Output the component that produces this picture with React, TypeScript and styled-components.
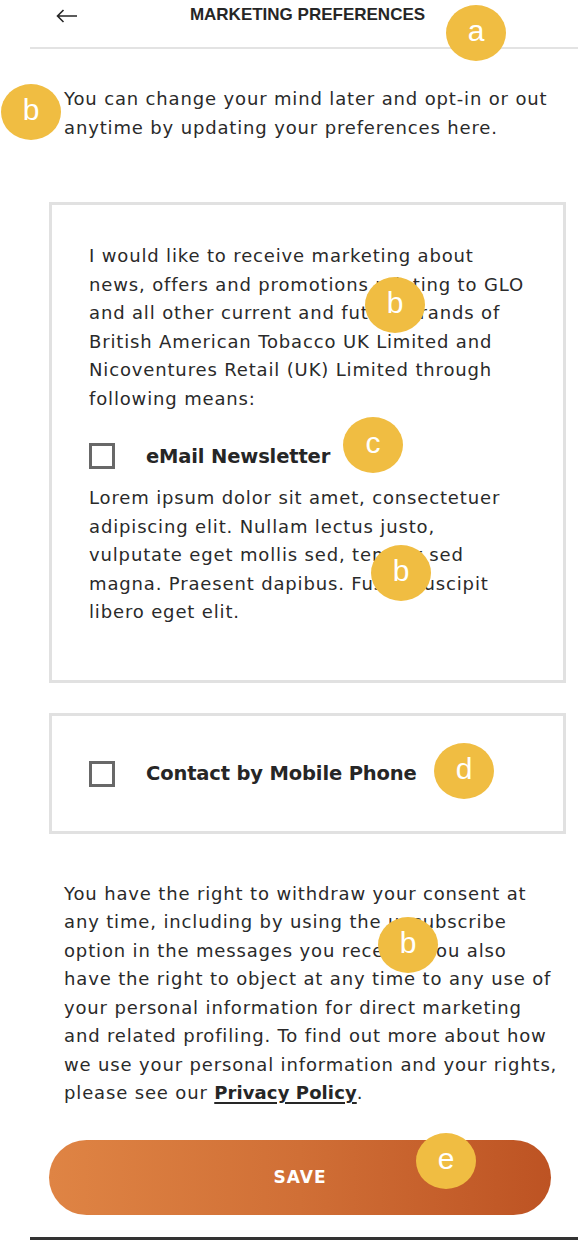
import React from "react";
import styled, { createGlobalStyle } from "styled-components";

const Global = createGlobalStyle`
  html, body { margin: 0; padding: 0; background: #fff; }
  body { font-family: "DejaVu Sans", sans-serif; color: #262626; }
  * { box-sizing: border-box; }
`;

const Page = styled.div`
  position: relative;
  width: 578px;
  height: 1240px;
  overflow: hidden;
  background: #fff;
`;

const Header = styled.header`
  position: relative;
  margin-left: 30px;
  padding-left: 7px;
  height: 49px;
  border-bottom: 2px solid #e3e3e3;
  display: flex;
  align-items: flex-start;
  justify-content: center;
`;

const BackButton = styled.button`
  position: absolute;
  left: 25px;
  top: 6px;
  width: 24px;
  height: 20px;
  padding: 0;
  border: none;
  background: none;
  display: flex;
  align-items: center;
  justify-content: center;
`;

const Title = styled.h1`
  margin: 5px 0 0;
  font-family: "Liberation Sans", Arial, sans-serif;
  font-size: 17px;
  line-height: 20px;
  font-weight: 700;
  color: #262626;
`;

const Paragraph = styled.p<{ $top: number }>`
  margin: ${(p) => p.$top}px 0 0 64px;
  white-space: nowrap;
  font-size: 18px;
  letter-spacing: 0.85px;
  line-height: 28.5px;
  color: #2a2a2a;
`;

const Card = styled.section<{ $top: number; $pad: string }>`
  margin: ${(p) => p.$top}px 12px 0 49px;
  border: 3px solid #e1e1e1;
  padding: ${(p) => p.$pad};
`;

const CardText = styled.p<{ $top?: number }>`
  margin: ${(p) => p.$top ?? 0}px 0 0;
  white-space: nowrap;
  font-size: 18px;
  letter-spacing: 0.85px;
  line-height: 28.5px;
  color: #2a2a2a;
`;

const OptionRow = styled.label<{ $top?: number }>`
  display: flex;
  align-items: center;
  gap: 31px;
  margin-top: ${(p) => p.$top ?? 0}px;
  height: 28px;
`;

const Box = styled.span`
  width: 26px;
  height: 26px;
  border: 3px solid #686868;
  flex: none;
`;

const OptionLabel = styled.span`
  font-size: 19.5px;
  font-weight: 700;
  letter-spacing: -0.15px;
  color: #262626;
`;

const Link = styled.a`
  font-weight: 700;
  letter-spacing: 0.1px;
  color: #262626;
  text-decoration: underline;
  text-decoration-thickness: 2px;
  text-underline-offset: 3px;
`;

const SaveButton = styled.button`
  display: block;
  margin: 32px 0 0 49px;
  width: 502px;
  height: 75px;
  border: none;
  border-radius: 38px;
  background: linear-gradient(90deg, #df8444 0%, #d06f36 50%, #bd5323 100%);
  color: #fff;
  font-family: "DejaVu Sans", sans-serif;
  font-size: 17px;
  font-weight: 700;
  letter-spacing: 1px;
`;

const BottomLine = styled.div`
  margin: 22px 0 0 30px;
  height: 3px;
  background: #333;
`;

const Badge = styled.div<{ $x: number; $y: number }>`
  position: absolute;
  left: ${(p) => p.$x - 30}px;
  top: ${(p) => p.$y - 28}px;
  width: 60px;
  height: 56px;
  border-radius: 50%;
  background: #f0bd42;
  color: #fff;
  font-family: "Liberation Sans", Arial, sans-serif;
  font-size: 30px;
  line-height: 52px;
  text-align: center;
`;

const badges: [string, number, number][] = [
  ["a", 476, 33],
  ["b", 31, 112],
  ["b", 395, 305],
  ["c", 373, 445],
  ["b", 401, 573],
  ["d", 464, 771],
  ["b", 408, 945],
  ["e", 446, 1161],
];

const Lines = ({ lines }: { lines: React.ReactNode[] }) => (
  <>
    {lines.map((l, i) => (
      <React.Fragment key={i}>
        {l}
        {i < lines.length - 1 && <br />}
      </React.Fragment>
    ))}
  </>
);

const intro = ["You can change your mind later and opt-in or out", "anytime by updating your preferences here."];
const consent = [
  "I would like to receive marketing about",
  "news, offers and promotions relating to GLO",
  "and all other current and future brands of",
  "British American Tobacco UK Limited and",
  "Nicoventures Retail (UK) Limited through",
  "following means:",
];
const lorem = [
  "Lorem ipsum dolor sit amet, consectetuer",
  "adipiscing elit. Nullam lectus justo,",
  "vulputate eget mollis sed, tempor sed",
  "magna. Praesent dapibus. Fusce suscipit",
  "libero eget elit.",
];
const rights: React.ReactNode[] = [
  "You have the right to withdraw your consent at",
  "any time, including by using the unsubscribe",
  "option in the messages you receive. You also",
  "have the right to object at any time to any use of",
  "your personal information for direct marketing",
  "and related profiling. To find out more about how",
  "we use your personal information and your rights,",
  <>
    please see our <Link href="#">Privacy Policy</Link>.
  </>,
];

export default function App() {
  return (
    <Page>
      <Global />
      <Header>
        <BackButton aria-label="Back">
          <svg width="22" height="14" viewBox="0 0 22 14" fill="none">
            <path d="M21 7H1.5M7.5 1L1.5 7L7.5 13" stroke="#262626" strokeWidth="1.6" />
          </svg>
        </BackButton>
        <Title>MARKETING PREFERENCES</Title>
      </Header>
      <Paragraph $top={36}>
        <Lines lines={intro} />
      </Paragraph>
      <Card $top={60} $pad="37px 37px 53px 37px">
        <CardText>
          <Lines lines={consent} />
        </CardText>
        <OptionRow $top={29}>
          <Box />
          <OptionLabel>eMail Newsletter</OptionLabel>
        </OptionRow>
        <CardText $top={14}>
          <Lines lines={lorem} />
        </CardText>
      </Card>
      <Card $top={30} $pad="44px 37px 43px 37px">
        <OptionRow>
          <Box />
          <OptionLabel>Contact by Mobile Phone</OptionLabel>
        </OptionRow>
      </Card>
      <Paragraph $top={46}>
        <Lines lines={rights} />
      </Paragraph>
      <SaveButton>SAVE</SaveButton>
      <BottomLine />
      {badges.map(([l, x, y], i) => (
        <Badge key={i} $x={x} $y={y}>
          {l}
        </Badge>
      ))}
    </Page>
  );
}
